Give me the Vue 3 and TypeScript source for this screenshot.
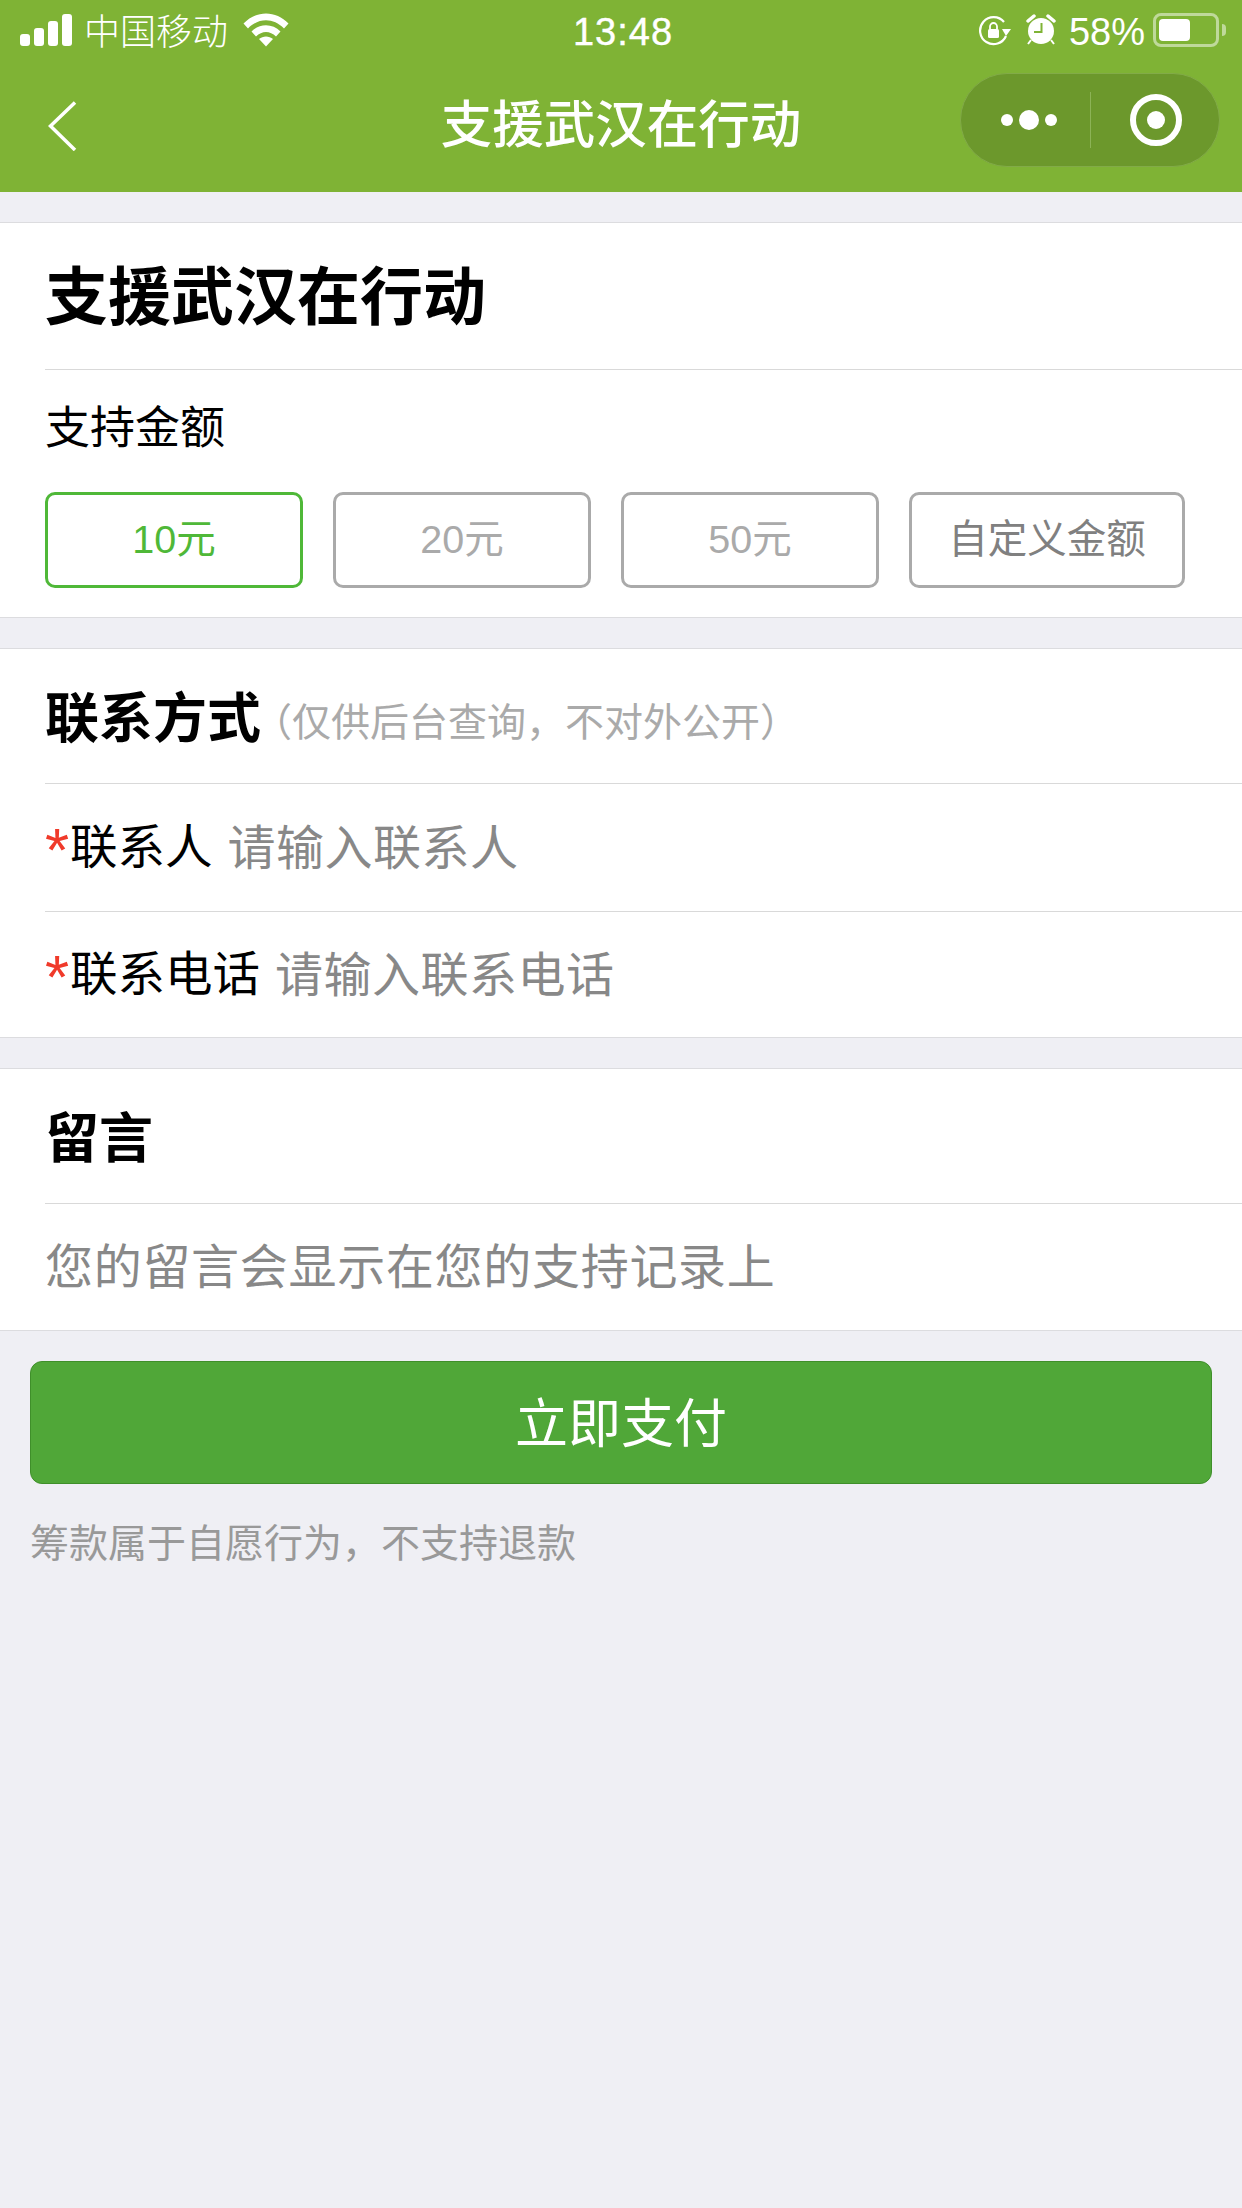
<template>
  <div class="page">
    <header class="header">
      <div class="status-bar">
        <div class="status-left">
          <div class="signal">
            <i v-for="h in signalBars" :key="h" :style="{ height: h + 'px' }"></i>
          </div>
          <span class="carrier">中国移动</span>
          <svg class="wifi" width="46" height="34" viewBox="0 0 46 34">
            <path d="M0.5 10.5 C13 -3 33 -3 45.500 10.500 L41 15.500 C30.500 4.500 15.500 4.500 5 15.500 Z" fill="#fff" />
            <path d="M8.500 18.500 C16.500 10 29.500 10 37.500 18.500 L33 23.500 C27 17.500 19 17.500 13 23.500 Z" fill="#fff" />
            <path d="M16 26 C20 22.500 26 22.500 30 26 L23 33.500 Z" fill="#fff" />
          </svg>
        </div>
        <span class="time">13:48</span>
        <div class="status-right">
          <svg class="rotate-lock" width="34" height="30" viewBox="0 0 34 30">
            <path d="M28 20 A13.500 13.500 0 1 1 26 6" fill="none" stroke="#fff" stroke-width="2.200" />
            <path d="M24 13 H33 L28 20 Z" fill="#fff" />
            <rect x="10" y="13" width="11" height="9" rx="1.500" fill="#fff" />
            <path d="M12 13 V10.500 A3.500 3.500 0 0 1 19 10.500 V13" fill="none" stroke="#fff" stroke-width="1.800" />
          </svg>
          <svg class="alarm" width="30" height="32" viewBox="0 0 30 32">
            <circle cx="15" cy="17" r="13" fill="#fff" />
            <path d="M2 7 L8 2 M28 7 L22 2" stroke="#fff" stroke-width="3.500" stroke-linecap="round" />
            <path d="M5 26 L2 30 M25 26 L28 30" stroke="#fff" stroke-width="2" />
            <path d="M15.500 9 V18 H8" fill="none" stroke="#7fb335" stroke-width="2" />
          </svg>
          <span class="percent">58%</span>
          <div class="battery">
            <div class="battery-body"><i :style="{ width: batteryWidth + 'px' }"></i></div>
            <span class="battery-tip"></span>
          </div>
        </div>
      </div>

      <div class="nav-bar">
        <svg class="back" width="30" height="50" viewBox="0 0 30 50">
          <path d="M27 1.500 L2.500 25 L27 49" fill="none" stroke="#fff" stroke-width="3.500" />
        </svg>
        <span class="nav-title">支援武汉在行动</span>
        <div class="capsule">
          <div class="capsule-dots">
            <i class="dot"></i>
            <i class="dot big"></i>
            <i class="dot"></i>
          </div>
          <span class="capsule-line"></span>
          <div class="capsule-target"><i></i></div>
        </div>
      </div>
    </header>

    <section class="block">
      <h1 class="main-title">支援武汉在行动</h1>
      <div class="amount-area">
        <p class="amount-label">支持金额</p>
        <div class="amount-list">
          <button
            v-for="item in amounts"
            :key="item.label"
            class="amount-btn"
            :class="{ active: item.value === currentAmount, custom: item.value === 0 }"
          >
            {{ item.label }}
          </button>
        </div>
      </div>
    </section>

    <section class="block">
      <div class="block-head">
        <h2 class="sub-title">联系方式</h2>
        <span class="hint">（仅供后台查询，不对外公开）</span>
      </div>
      <div v-for="row in contactRows" :key="row.label" class="form-row">
        <span class="star">*</span>
        <span class="form-label">{{ row.label }}</span>
        <span class="placeholder">{{ row.placeholder }}</span>
      </div>
    </section>

    <section class="block">
      <div class="block-head">
        <h2 class="sub-title">留言</h2>
      </div>
      <div class="message-row">
        <span class="placeholder">您的留言会显示在您的支持记录上</span>
      </div>
    </section>

    <div class="footer">
      <button class="pay-btn">立即支付</button>
      <p class="note">筹款属于自愿行为，不支持退款</p>
    </div>
  </div>
</template>

<script setup lang="ts">
import { ref } from 'vue'

interface AmountItem {
  label: string
  value: number
}

const signalBars = [12, 18, 25, 32]
const batteryWidth = 31

const amounts: AmountItem[] = [
  { label: '10元', value: 10 },
  { label: '20元', value: 20 },
  { label: '50元', value: 50 },
  { label: '自定义金额', value: 0 },
]

const currentAmount = ref(10)

const contactRows = [
  { label: '联系人', placeholder: '请输入联系人' },
  { label: '联系电话', placeholder: '请输入联系电话' },
]
</script>

<style>
html,
body {
  margin: 0;
  background: #efeff4;
}
</style>

<style scoped>
.page {
  width: 1242px;
  min-height: 2208px;
  background: #efeff4;
  font-family: 'Liberation Sans', 'Noto Sans CJK SC', sans-serif;
  color: #000;
  overflow: hidden;
}

/* 頂部綠色區 */
.header {
  height: 192px;
  box-sizing: border-box;
  background: #7fb335;
  color: #fff;
}

.status-bar {
  height: 60px;
  display: grid;
  grid-template-columns: 1fr auto 1fr;
  align-items: center;
  padding: 0 16px 0 20px;
}

.status-left {
  display: flex;
  align-items: center;
}

.signal {
  display: flex;
  align-items: flex-end;
  gap: 4px;
  height: 32px;
}

.signal i {
  width: 10px;
  background: #fff;
  border-radius: 3px;
}

.carrier {
  font-size: 36px;
  font-weight: 300;
  line-height: 50px;
  margin-left: 12px;
  margin-top: 5px;
}

.wifi {
  margin-left: 15px;
}

.time {
  font-size: 38px;
  letter-spacing: 1px;
  line-height: 50px;
  margin-top: 3px;
  -webkit-text-stroke: 0.4px #fff;
}

.status-right {
  display: flex;
  align-items: center;
  justify-content: flex-end;
}

.rotate-lock {
  margin-top: 2px;
}

.alarm {
  margin-left: 14px;
}

.percent {
  font-size: 38px;
  line-height: 50px;
  margin-left: 13px;
  margin-right: 8px;
  margin-top: 3px;
}

.battery {
  display: flex;
  align-items: center;
}

.battery-body {
  width: 66px;
  height: 34px;
  box-sizing: border-box;
  border: 3px solid #bfd99a;
  border-radius: 8px;
  padding: 3px;
  display: flex;
}

.battery-body i {
  background: #fff;
  border-radius: 4px;
}

.battery-tip {
  width: 4px;
  height: 12px;
  margin-left: 3px;
  background: #bfd99a;
  border-radius: 0 4px 4px 0;
}

.nav-bar {
  height: 120px;
  position: relative;
  display: flex;
  align-items: center;
  justify-content: center;
}

.back {
  position: absolute;
  left: 48px;
  top: 41px;
}

.nav-title {
  font-size: 51.5px;
  font-weight: 500;
}

.capsule {
  position: absolute;
  left: 960px;
  top: 13px;
  width: 260px;
  height: 94px;
  box-sizing: border-box;
  display: flex;
  align-items: center;
  background: #6c982c;
  border: 1px solid #82ab48;
  border-radius: 47px;
}

.capsule-dots {
  width: 129px;
  display: flex;
  align-items: center;
  justify-content: center;
  gap: 6px;
  padding-left: 6px;
  box-sizing: border-box;
}

.dot {
  width: 12px;
  height: 12px;
  border-radius: 50%;
  background: #fff;
}

.dot.big {
  width: 20px;
  height: 20px;
}

.capsule-line {
  width: 1px;
  height: 56px;
  background: #8cb356;
}

.capsule-target {
  width: 52px;
  height: 52px;
  box-sizing: border-box;
  margin-left: 39px;
  border: 6px solid #fff;
  border-radius: 50%;
  display: flex;
  align-items: center;
  justify-content: center;
}

.capsule-target i {
  width: 18px;
  height: 18px;
  border-radius: 50%;
  background: #fff;
}

/* 白色區塊 */
.block {
  margin-top: 30px;
  padding-left: 45px;
  background: #fff;
  border-top: 1px solid #dcdcdf;
  border-bottom: 1px solid #dcdcdf;
}

.main-title {
  margin: 0;
  height: 146px;
  line-height: 148px;
  font-size: 63px;
  font-weight: 700;
  border-bottom: 1px solid #d9d9d9;
}

.amount-area {
  height: 247px;
  box-sizing: border-box;
  padding-top: 29px;
}

.amount-label {
  margin: 0;
  font-size: 45px;
  line-height: 60px;
}

.amount-list {
  display: flex;
  gap: 30px;
  margin-top: 33px;
}

.amount-btn {
  width: 258px;
  height: 96px;
  padding: 0 0 10px;
  background: #fff;
  border: 3px solid #aaa;
  border-radius: 10px;
  color: #aaa;
  font-family: inherit;
  font-size: 39.5px;
}

.amount-btn.active {
  border-color: #4fb838;
  color: #4fb838;
}

.amount-btn.custom {
  width: 276px;
  color: #808080;
}

.block-head {
  height: 135px;
  box-sizing: border-box;
  padding-bottom: 3px;
  display: flex;
  align-items: center;
  border-bottom: 1px solid #d9d9d9;
}

.sub-title {
  margin: 0;
  font-size: 54px;
  font-weight: 700;
}

.hint {
  font-size: 39px;
  color: #aaa;
  margin-left: -8px;
  margin-top: 8px;
}

.form-row {
  height: 128px;
  box-sizing: border-box;
  padding-bottom: 8px;
  display: flex;
  align-items: center;
  border-bottom: 1px solid #d9d9d9;
}

.form-row:last-child {
  height: 125px;
  border-bottom: none;
}

.star {
  font-size: 62px;
  line-height: 1;
  margin-top: 12px;
  color: #f03a2a;
  width: 25px;
}

.form-label {
  font-size: 47.5px;
  margin-right: 15px;
}

.placeholder {
  font-size: 48px;
  letter-spacing: 0.5px;
  color: #888;
}

.message-row {
  height: 126px;
  box-sizing: border-box;
  padding-bottom: 8px;
  display: flex;
  align-items: center;
}

.message-row .placeholder {
  letter-spacing: 0.7px;
}

.footer {
  padding: 30px 30px 0;
}

.pay-btn {
  display: block;
  width: 100%;
  height: 123px;
  padding: 0 0 6px;
  background: #50a738;
  border: 1px solid #3f8f2a;
  border-radius: 12px;
  color: #fff;
  font-family: inherit;
  font-size: 53px;
}

.note {
  margin: 35px 0 0;
  font-size: 39px;
  line-height: 50px;
  color: #999;
}
</style>
